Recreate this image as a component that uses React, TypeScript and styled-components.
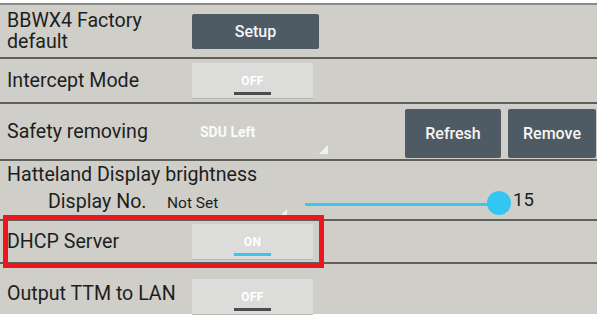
import { createGlobalStyle, styled } from "styled-components";

const GlobalStyle = createGlobalStyle`
  html, body {
    margin: 0;
    padding: 0;
    background: #ffffff;
  }
  body {
    font-family: Roboto, "Noto Sans", "Liberation Sans", sans-serif;
  }
`;

const Page = styled.div`
  padding-top: 3px;
  width: 611px;
  height: 315px;
  box-sizing: border-box;
  overflow: hidden;
`;

const Panel = styled.div`
  width: 597px;
  background: #cfcec8;
  border-top: 2px solid #8a8a86;
  display: flex;
  flex-direction: column;
`;

const Row = styled.div<{ $h: number; $last?: boolean }>`
  position: relative;
  display: flex;
  align-items: center;
  height: ${(p) => p.$h}px;
  border-bottom: ${(p) => (p.$last ? "none" : "2px solid #5f5f5b")};
`;

const Label = styled.div<{ $top?: number }>`
  width: 192px;
  box-sizing: border-box;
  padding-left: 7px;
  font-size: 19.6px;
  line-height: 21px;
  color: #1e1e1e;
  ${(p) => (p.$top ? `align-self: flex-start; padding-top: ${p.$top}px;` : "")}
`;

const DarkButton = styled.button<{ $w: number; $h: number }>`
  width: ${(p) => p.$w}px;
  height: ${(p) => p.$h}px;
  border: none;
  border-radius: 2px;
  background: #4e5a64;
  color: #f6f6f6;
  font-family: Roboto, "Liberation Sans", sans-serif;
  font-size: 16px;
  font-weight: 500;
  padding: 0;
`;

const Toggle = styled.div<{ $on?: boolean }>`
  position: relative;
  width: 121px;
  height: 35px;
  background: #dcdcdb;
  box-shadow: 0 1px 0 #b9b9b5;
  display: flex;
  align-items: center;
  justify-content: center;
  color: #ffffff;
  font-size: 12px;
  font-weight: 700;
  letter-spacing: 0.3px;
  &::after {
    content: "";
    position: absolute;
    left: 42px;
    bottom: 3px;
    width: 37px;
    height: 3px;
    background: ${(p) => (p.$on ? "#38c6ec" : "#4b4b4b")};
  }
`;

const Spinner = styled.div<{
  $w: number;
  $h: number;
  $size: number;
  $color: string;
  $weight: number;
}>`
  position: relative;
  width: ${(p) => p.$w}px;
  height: ${(p) => p.$h}px;
  box-sizing: border-box;
  padding-left: 8px;
  display: flex;
  align-items: center;
  color: ${(p) => p.$color};
  font-size: ${(p) => p.$size}px;
  font-weight: ${(p) => p.$weight};
  &::after {
    content: "";
    position: absolute;
    right: 0;
    bottom: 2px;
    width: 0;
    height: 0;
    border-left: 9px solid transparent;
    border-bottom: 9px solid #f1f1ef;
  }
`;

const Spacer = styled.div`
  flex: 1;
`;

const ButtonGroup = styled.div`
  display: flex;
  gap: 7px;
  padding-right: 1px;
  align-self: flex-end;
  padding-bottom: 1px;
`;

const BrightnessRow = styled.div`
  display: flex;
  flex-direction: column;
  height: 60px;
  border-bottom: 2px solid #5f5f5b;
  box-sizing: border-box;
  padding-top: 3px;
`;

const Title = styled.div`
  padding-left: 7px;
  font-size: 19.6px;
  line-height: 22px;
  color: #1e1e1e;
`;

const SubRow = styled.div`
  display: flex;
  align-items: center;
  height: 34px;
`;

const SubLabel = styled.div`
  width: 159px;
  box-sizing: border-box;
  padding-left: 48px;
  font-size: 19.6px;
  color: #1e1e1e;
  margin-top: -3px;
`;

const Slider = styled.div`
  position: relative;
  margin-left: 18px;
  width: 194px;
  height: 24px;
  &::before {
    content: "";
    position: absolute;
    left: 0;
    right: 0;
    top: 12px;
    height: 3px;
    background: #3ac8ee;
  }
`;

const Thumb = styled.div`
  position: absolute;
  right: -12px;
  top: 0;
  width: 24px;
  height: 24px;
  border-radius: 50%;
  background: #33c6f0;
`;

const Value = styled.div`
  margin-left: 14px;
  font-size: 18.5px;
  color: #1e1e1e;
  margin-top: -6px;
`;

const Highlight = styled.div`
  position: absolute;
  left: 3px;
  top: -6px;
  width: 321px;
  height: 53px;
  box-sizing: border-box;
  border: 5px solid #ec1620;
  pointer-events: none;
`;

const ToggleSlot = styled.div`
  align-self: flex-start;
  padding-top: 15px;
`;

export default function App() {
  return (
    <>
      <GlobalStyle />
      <Page>
        <Panel>
          <Row $h={52}>
            <Label>
              BBWX4 Factory
              <br />
              default
            </Label>
            <DarkButton $w={127} $h={35}>
              Setup
            </DarkButton>
          </Row>
          <Row $h={43}>
            <Label>Intercept Mode</Label>
            <Toggle>OFF</Toggle>
          </Row>
          <Row $h={55}>
            <Label>Safety removing</Label>
            <Spinner $w={136} $h={48} $size={14} $color="#fbfbfb" $weight={700}>
              SDU Left
            </Spinner>
            <Spacer />
            <ButtonGroup>
              <DarkButton $w={96} $h={49}>
                Refresh
              </DarkButton>
              <DarkButton $w={88} $h={49}>
                Remove
              </DarkButton>
            </ButtonGroup>
          </Row>
          <BrightnessRow>
            <Title>Hatteland Display brightness</Title>
            <SubRow>
              <SubLabel>Display No.</SubLabel>
              <Spinner $w={128} $h={34} $size={15.5} $color="#1e1e1e" $weight={400}>
                Not Set
              </Spinner>
              <Slider>
                <Thumb />
              </Slider>
              <Value>15</Value>
            </SubRow>
          </BrightnessRow>
          <Row $h={41}>
            <Label>DHCP Server</Label>
            <Toggle $on>ON</Toggle>
            <Highlight />
          </Row>
          <Row $h={50} $last>
            <Label $top={19}>Output TTM to LAN</Label>
            <ToggleSlot>
              <Toggle>OFF</Toggle>
            </ToggleSlot>
          </Row>
        </Panel>
      </Page>
    </>
  );
}
